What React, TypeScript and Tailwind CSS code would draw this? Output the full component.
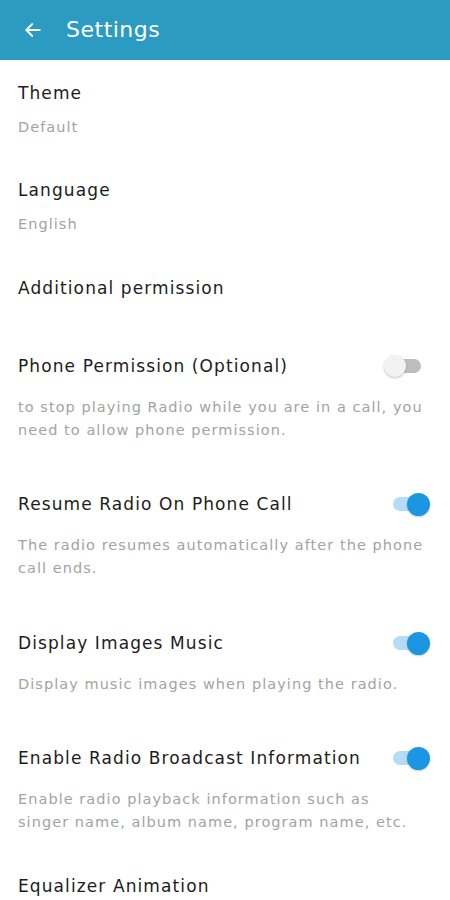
import React from "react";

function Toggle({ on }: { on: boolean }) {
  return (
    <div className="relative w-[46px] h-[24px] flex items-center shrink-0">
      <div
        className={`absolute left-[9px] w-[28px] h-[14px] rounded-full ${on ? "bg-[#b5dcf6]" : "bg-[#bdbdbd]"}`}
      />
      {on ? (
        <div className="absolute right-0 w-[23px] h-[23px] rounded-full bg-[#1b96e3] shadow-[0_1px_2px_rgba(0,0,0,0.2)]" />
      ) : (
        <div className="absolute left-0 w-[22px] h-[22px] rounded-full bg-[#f2f2f2] shadow-[0_1px_2px_rgba(0,0,0,0.25)]" />
      )}
    </div>
  );
}

const titleCls = "text-[17px] leading-[24px] tracking-[1.1px] text-[#1c1c1c]";
const subCls = "text-[14.5px] tracking-[1.05px] text-[#a3a3a3]";

function Simple({ title, sub, mt }: { title: string; sub?: string; mt: string }) {
  return (
    <div className={`px-[18px] ${mt}`}>
      <div className={titleCls}>{title}</div>
      {sub && <div className={`mt-[12px] leading-[20px] ${subCls}`}>{sub}</div>}
    </div>
  );
}

function SwitchItem({
  title,
  desc,
  on,
  mt,
}: {
  title: string;
  desc: React.ReactNode;
  on: boolean;
  mt: string;
}) {
  return (
    <div className={`pl-[18px] pr-[20px] ${mt}`}>
      <div className="flex items-center justify-between">
        <div className={titleCls}>{title}</div>
        <Toggle on={on} />
      </div>
      <div className={`mt-[18px] leading-[23px] ${subCls}`}>{desc}</div>
    </div>
  );
}

export default function App() {
  return (
    <div
      className="w-[450px] h-[900px] overflow-hidden bg-white"
      style={{ fontFamily: '"DejaVu Sans", "Open Sans", sans-serif' }}
    >
      <div className="h-[60px] bg-[#2b9bc2] flex items-center pl-[23px]">
        <svg width="20" height="20" viewBox="0 0 24 24" fill="none" stroke="white" strokeWidth="2.4" strokeLinecap="round" strokeLinejoin="round">
          <path d="M20 12H5" />
          <path d="M11 5l-7 7 7 7" />
        </svg>
        <div className="ml-[23px] text-white text-[22px] leading-[28px] tracking-[0.5px]">Settings</div>
      </div>
      <Simple title="Theme" sub="Default" mt="mt-[21px]" />
      <Simple title="Language" sub="English" mt="mt-[41px]" />
      <Simple title="Additional permission" mt="mt-[42px]" />
      <SwitchItem
        title="Phone Permission (Optional)"
        desc="to stop playing Radio while you are in a call, you need to allow phone permission."
        on={false}
        mt="mt-[54px]"
      />
      <SwitchItem
        title="Resume Radio On Phone Call"
        desc="The radio resumes automatically after the phone call ends."
        on={true}
        mt="mt-[50px]"
      />
      <SwitchItem
        title="Display Images Music"
        desc="Display music images when playing the radio."
        on={true}
        mt="mt-[51px]"
      />
      <SwitchItem
        title="Enable Radio Broadcast Information"
        desc={
          <>
            Enable radio playback information such as
            <br />
            singer name, album name, program name, etc.
          </>
        }
        on={true}
        mt="mt-[50px]"
      />
      <Simple title="Equalizer Animation" mt="mt-[40px]" />
    </div>
  );
}
